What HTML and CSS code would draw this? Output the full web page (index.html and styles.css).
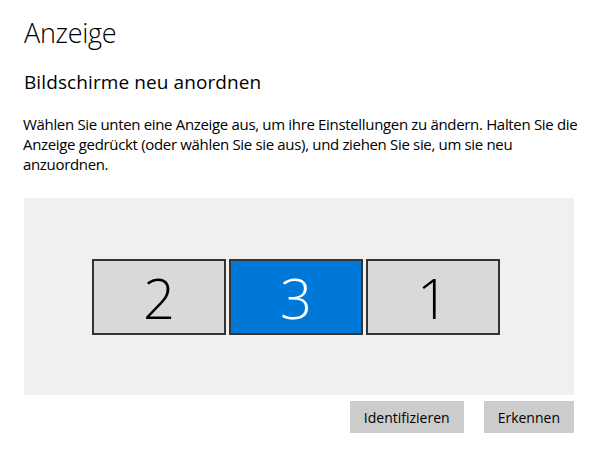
FILE: index.html
```html
<!DOCTYPE html>
<html lang="de">
<head>
  <meta charset="UTF-8">
  <title>Anzeige</title>
  <link rel="stylesheet" href="styles.css">
</head>
<body>

  <h1 class="page-title">Anzeige</h1>
  <h2 class="section-title">Bildschirme neu anordnen</h2>
  <p class="hint">Wählen Sie unten eine Anzeige aus, um ihre Einstellungen zu ändern. Halten Sie die Anzeige gedrückt (oder wählen Sie sie aus), und ziehen Sie sie, um sie neu anzuordnen.</p>

  <div class="arrange">
    <div class="monitors">
      <div class="monitor">2</div>
      <div class="monitor selected">3</div>
      <div class="monitor">1</div>
    </div>
  </div>

  <div class="actions">
    <button type="button">Identifizieren</button>
    <button type="button">Erkennen</button>
  </div>

</body>
</html>
```

FILE: styles.css
```css
body {
  margin: 0;
  padding: 0 22px 0 24px;
  background-color: #fff;
  color: #000;
  font-family: 'Open Sans', 'Noto Sans', sans-serif;
}

.page-title {
  margin: 0;
  padding-top: 13px;
  font-size: 27px;
  font-weight: 300;
  line-height: 40px;
  letter-spacing: -0.3px;
}

.section-title {
  margin: 17px 0 0;
  font-size: 19px;
  font-weight: 400;
  line-height: 24px;
  letter-spacing: 0.1px;
}

.hint {
  margin: 20px -12px 0 -1px;
  font-size: 15px;
  line-height: 20px;
  letter-spacing: -0.33px;
}

.arrange {
  margin-top: 24px;
  height: 197px;
  background-color: #f0f0f0;
  display: flex;
  align-items: center;
  justify-content: center;
}

.monitors {
  display: flex;
  gap: 3px;
  margin-left: -6px;
}

.monitor {
  width: 130px;
  height: 72px;
  border: 2px solid #333;
  background-color: #d9d9d9;
  display: flex;
  align-items: center;
  justify-content: center;
  font-size: 56px;
  font-weight: 300;
  color: #000;
}

.monitor.selected {
  background-color: #0078d7;
  color: #fff;
}

.actions {
  display: flex;
  justify-content: flex-end;
  gap: 20px;
  margin-top: 6px;
}

button {
  height: 32px;
  padding: 0 14px;
  border: none;
  background-color: #cccccc;
  color: #000;
  font-family: inherit;
  font-size: 14px;
}
```
